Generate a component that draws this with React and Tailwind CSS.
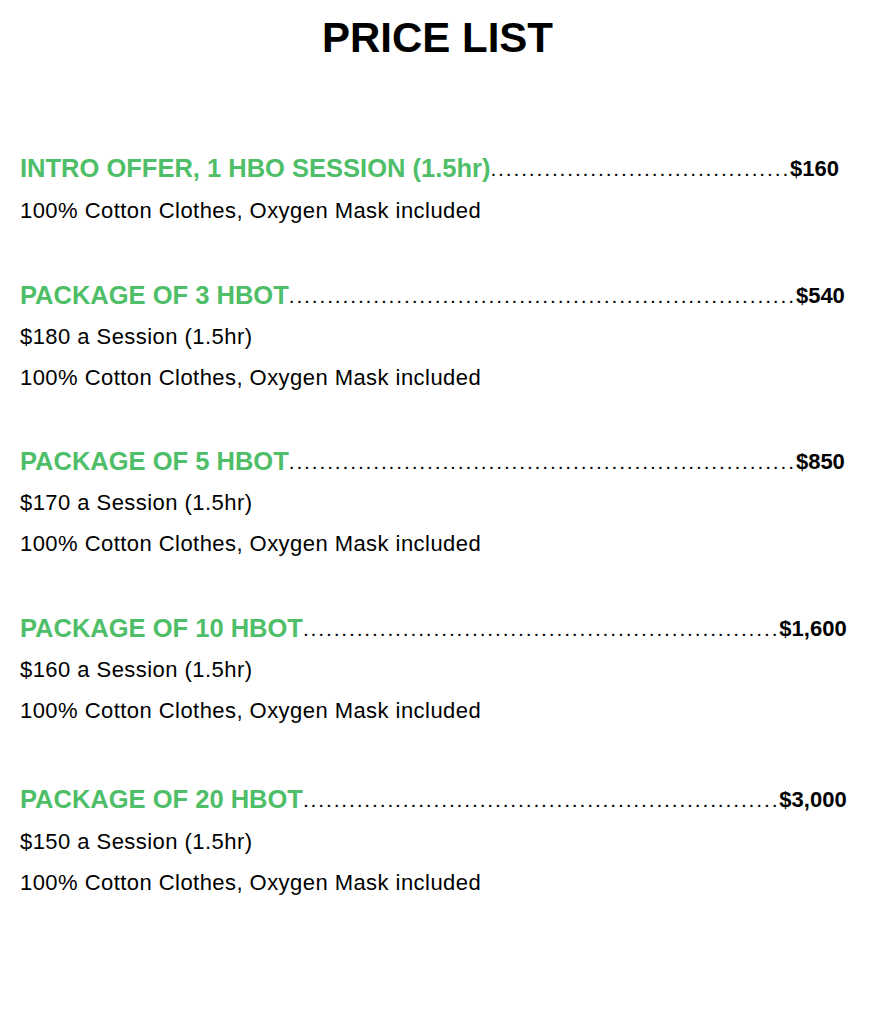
const items = [
  {
    title: "INTRO OFFER, 1 HBO SESSION (1.5hr)",
    price: "$160",
    dots: 39,
    lines: ["100% Cotton Clothes, Oxygen Mask included"],
    gap: "mt-[89px]",
    bodyGap: "mt-[1px]",
  },
  {
    title: "PACKAGE OF 3 HBOT",
    price: "$540",
    dots: 66,
    lines: ["$180 a Session (1.5hr)", "100% Cotton Clothes, Oxygen Mask included"],
    gap: "mt-[44px]",
    bodyGap: "mt-0",
  },
  {
    title: "PACKAGE OF 5 HBOT",
    price: "$850",
    dots: 66,
    lines: ["$170 a Session (1.5hr)", "100% Cotton Clothes, Oxygen Mask included"],
    gap: "mt-[43px]",
    bodyGap: "mt-0",
  },
  {
    title: "PACKAGE OF 10 HBOT",
    price: "$1,600",
    dots: 62,
    lines: ["$160 a Session (1.5hr)", "100% Cotton Clothes, Oxygen Mask included"],
    gap: "mt-[44px]",
    bodyGap: "mt-0",
  },
  {
    title: "PACKAGE OF 20 HBOT",
    price: "$3,000",
    dots: 62,
    lines: ["$150 a Session (1.5hr)", "100% Cotton Clothes, Oxygen Mask included"],
    gap: "mt-[48px]",
    bodyGap: "mt-[1px]",
  },
];

function PriceRow({ item }) {
  return (
    <div className={item.gap}>
      <div className="flex items-center h-[41px] whitespace-nowrap">
        <span className="text-[25.5px] font-bold text-[#4fbe68] leading-[41px]">
          {item.title}
        </span>
        <span className="text-[21px] tracking-[1.85px] text-black leading-[41px]">
          {".".repeat(item.dots)}
        </span>
        <span className="text-[22px] font-bold text-black leading-[41px]">
          {item.price}
        </span>
      </div>
      <div className={item.bodyGap}>
        {item.lines.map((line) => (
          <p key={line} className="text-[22px] tracking-[0.45px] text-black leading-[41px] whitespace-nowrap">
            {line}
          </p>
        ))}
      </div>
    </div>
  );
}

export default function App() {
  return (
    <div
      className="w-[870px] h-[1030px] bg-white overflow-hidden"
      style={{ fontFamily: '"Liberation Sans", Arial, sans-serif' }}
    >
      <h1 className="pt-[17px] pl-[5px] text-center text-[42px] font-bold leading-[42px] text-black">
        PRICE LIST
      </h1>

      <div className="pl-[20px]">
        {items.map((item) => (
          <PriceRow key={item.title} item={item} />
        ))}
      </div>
    </div>
  );
}
